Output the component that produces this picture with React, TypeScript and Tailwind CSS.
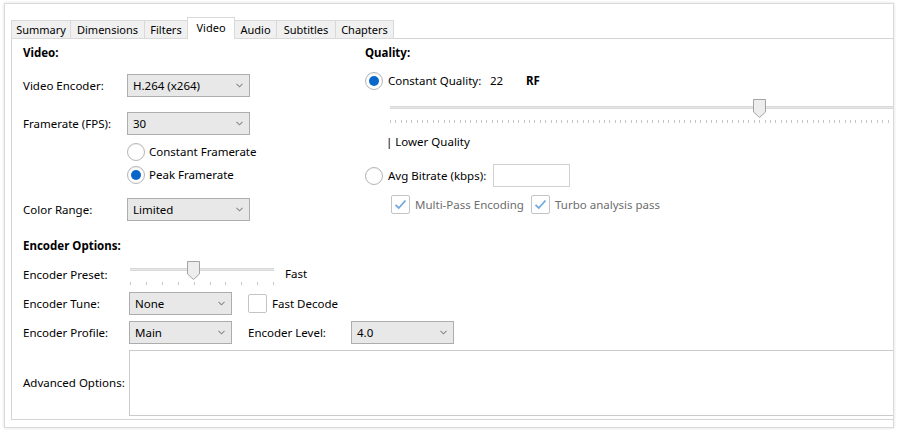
import * as React from "react";

const TABS: { name: string; w: string }[] = [
  { name: "Summary", w: "w-[60px]" },
  { name: "Dimensions", w: "w-[75px]" },
  { name: "Filters", w: "w-[44px]" },
  { name: "Video", w: "w-[48px]" },
  { name: "Audio", w: "w-[43px]" },
  { name: "Subtitles", w: "w-[60px]" },
  { name: "Chapters", w: "w-[59px]" },
];

function Chevron() {
  return (
    <svg width="7" height="5" viewBox="0 0 7 5" className="shrink-0">
      <path d="M0.5 0.8 L3.5 3.8 L6.5 0.8" fill="none" stroke="#8a8a8a" strokeWidth="1.1" />
    </svg>
  );
}

function Combo({ value, className }: { value: string; className: string }) {
  return (
    <div
      className={`flex h-[23px] items-center justify-between border border-[#adadad] bg-[#e8e8e8] pl-[5px] pr-[6px] ${className}`}
    >
      <span>{value}</span>
      <Chevron />
    </div>
  );
}

function Radio({ checked }: { checked?: boolean }) {
  return (
    <div className="flex h-[18px] w-[18px] shrink-0 items-center justify-center rounded-full border border-[#b5b5b5] bg-white shadow-[inset_0_1px_1px_rgba(0,0,0,0.06)]">
      {checked && <div className="h-[10px] w-[10px] rounded-full bg-[#0867c9]" />}
    </div>
  );
}

function Check({ checked }: { checked?: boolean }) {
  return (
    <div className="flex h-[19px] w-[19px] shrink-0 items-center justify-center rounded-[2px] border border-[#c4c4c4] bg-white">
      {checked && (
        <svg width="13" height="11" viewBox="0 0 13 11">
          <path d="M1.5 5.8 L4.8 9 L11.5 1.5" fill="none" stroke="#72a9dc" strokeWidth="1.8" />
        </svg>
      )}
    </div>
  );
}

function Thumb() {
  return (
    <svg width="13" height="19" viewBox="0 0 13 19">
      <path d="M0.5 0.5 H12.5 V13 L6.5 18.5 L0.5 13 Z" fill="#ededed" stroke="#a3a3a3" />
    </svg>
  );
}

/** Track + thumb + tick row. Ticks drawn in a small svg. */
function Slider({
  width,
  thumbX,
  ticks,
  step,
  className,
}: {
  width: number;
  thumbX: number;
  ticks: number;
  step: number;
  className?: string;
}) {
  return (
    <div className={`relative h-[26px] shrink-0 ${className ?? ""}`} style={{ width }}>
      <div className="absolute left-0 right-0 top-[7px] h-[3px] border-y border-[#d9d9d9] bg-[#e6e6e6]" />
      <div className="absolute top-0" style={{ left: thumbX - 6 }}>
        <Thumb />
      </div>
      <svg className="absolute left-0 top-[21px]" width={width} height="4">
        {Array.from({ length: ticks }).map((_, i) => (
          <rect key={i} x={Math.round(i * step)} y="0" width="1" height="3" fill="#c6c6c6" />
        ))}
      </svg>
    </div>
  );
}

export default function App() {
  return (
    <div className="h-[430px] w-[900px] bg-white pl-[4px] pt-[3px] font-['Noto_Sans',sans-serif] text-[11.5px] leading-[16px] text-black">
      <div className="h-[425px] w-[890px] overflow-hidden border border-[#dadada] bg-white pl-[6px] pt-[13px] shadow-[0_0_3px_rgba(0,0,0,0.14)]">
        {/* tab strip */}
        <div className="relative z-10 -mb-px flex items-end text-[11px]">
          {TABS.map((t, i) =>
            t.name === "Video" ? (
              <div
                key={t.name}
                className={`-ml-px flex h-[22px] items-center justify-center border border-b-0 border-[#d9d9d9] bg-white pb-[2px] ${t.w}`}
              >
                {t.name}
              </div>
            ) : (
              <div
                key={t.name}
                className={`flex h-[19px] items-center justify-center border border-[#d9d9d9] bg-[#f0f0f0] ${i === 0 ? "" : "-ml-px"} ${t.w}`}
              >
                {t.name}
              </div>
            )
          )}
        </div>

        {/* tab page */}
        <div className="w-[900px] whitespace-nowrap border border-[#d4d4d4] bg-white pb-[3px] pl-[11px]">
          <div className="flex">
            {/* left column */}
            <div className="flex w-[344px] flex-col">
              <div className="mt-[6px] font-bold">Video:</div>
              <div className="mt-[13px] flex items-center">
                <span className="w-[104px]">Video Encoder:</span>
                <Combo value="H.264 (x264)" className="w-[123px]" />
              </div>
              <div className="mt-[15px] flex items-center">
                <span className="w-[104px]">Framerate (FPS):</span>
                <Combo value="30" className="w-[123px]" />
              </div>
              <div className="mt-[8px] flex items-center gap-[4px] pl-[104px]">
                <Radio />
                <span>Constant Framerate</span>
              </div>
              <div className="mt-[5px] flex items-center gap-[4px] pl-[104px]">
                <Radio checked />
                <span>Peak Framerate</span>
              </div>
              <div className="mt-[14px] flex items-center">
                <span className="w-[104px]">Color Range:</span>
                <Combo value="Limited" className="w-[123px]" />
              </div>
            </div>

            {/* right column */}
            <div className="flex flex-1 flex-col">
              <div className="mt-[6px] font-bold">Quality:</div>
              <div className="mt-[11px] flex items-center">
                <Radio checked />
                <span className="ml-[5px] w-[102px]">Constant Quality:</span>
                <span className="w-[36px]">22</span>
                <span className="font-bold">RF</span>
              </div>
              <Slider width={520} thumbX={369} ticks={98} step={5.35} className="ml-[25px] mt-[9px]" />
              <div className="ml-[21px] mt-[9px]">| Lower Quality</div>
              <div className="mt-[14px] flex items-center">
                <Radio />
                <span className="ml-[5px] w-[105px]">Avg Bitrate (kbps):</span>
                <div className="h-[23px] w-[77px] border border-[#d0d0d0] bg-white" />
              </div>
              <div className="ml-[26px] mt-[8px] flex items-center text-[#6d6d6d]">
                <div className="flex w-[140px] items-center gap-[5px]">
                  <Check checked />
                  <span>Multi-Pass Encoding</span>
                </div>
                <div className="flex items-center gap-[5px]">
                  <Check checked />
                  <span>Turbo analysis pass</span>
                </div>
              </div>
            </div>
          </div>

          {/* encoder options */}
          <div className="mt-[17px] font-bold">Encoder Options:</div>
          <div className="mt-[7px] flex items-center">
            <span className="w-[107px] pt-[2px]">Encoder Preset:</span>
            <Slider width={144} thumbX={63} ticks={10} step={15.9} />
            <span className="ml-[11px]">Fast</span>
          </div>
          <div className="mt-[5px] flex items-center">
            <span className="w-[106px]">Encoder Tune:</span>
            <Combo value="None" className="w-[103px]" />
            <div className="ml-[16px] flex items-center gap-[5px]">
              <Check />
              <span>Fast Decode</span>
            </div>
          </div>
          <div className="mt-[6px] flex items-center">
            <span className="w-[106px]">Encoder Profile:</span>
            <Combo value="Main" className="w-[103px]" />
            <span className="ml-[16px] w-[103px]">Encoder Level:</span>
            <Combo value="4.0" className="w-[103px]" />
          </div>
          <div className="mt-[6px] flex items-center">
            <span className="w-[106px]">Advanced Options:</span>
            <div className="h-[66px] flex-1 border border-[#cbcbcb] bg-white" />
          </div>
        </div>
      </div>
    </div>
  );
}
